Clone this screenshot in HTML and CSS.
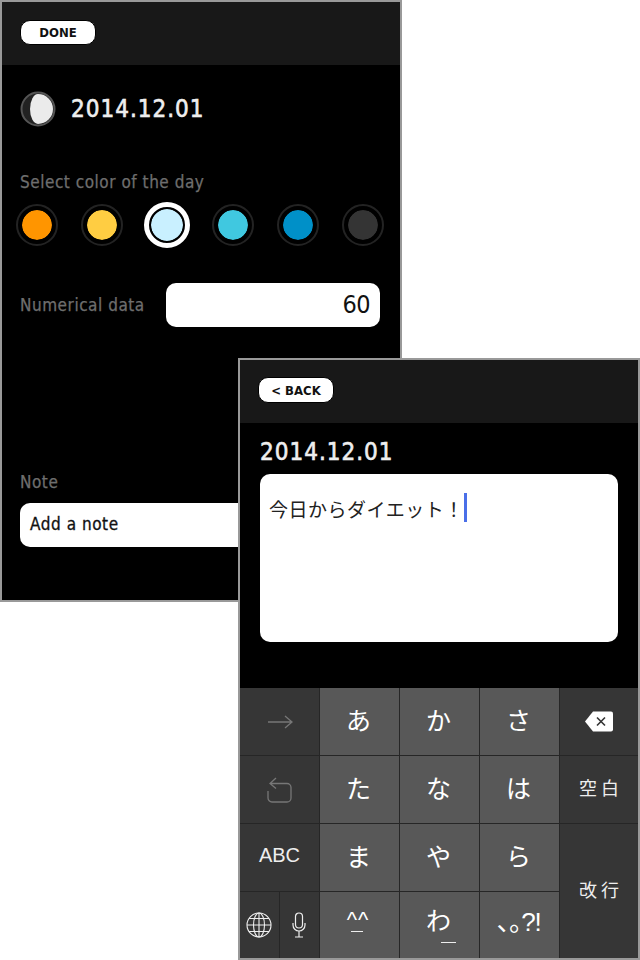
FILE: index.html
```html
<!DOCTYPE html>
<html lang="ja">
<head>
<meta charset="utf-8">
<title>Day entry</title>
<link rel="stylesheet" href="styles.css">
</head>
<body>
<section class="phone phone-detail">
  <header class="bar"><button class="pill pill-done">DONE</button></header>
  <div class="detail-body">
    <div class="date-row">
      <svg class="moon" width="36" height="36" viewBox="0 0 36 36"><circle cx="18" cy="18" r="16.500" fill="#222" stroke="#555" stroke-width="2"/><path d="M18 3A15 15 0 0 1 18 33A8 15 0 0 1 18 3z" fill="#ebebeb"/></svg>
      <h1 class="date">2014.12.01</h1>
    </div>
    <p class="label label-color">Select color of the day</p>
    <div class="swatches">
      <span class="swatch c1"></span>
      <span class="swatch c2"></span>
      <span class="swatch c3 selected"></span>
      <span class="swatch c4"></span>
      <span class="swatch c5"></span>
      <span class="swatch c6"></span>
    </div>
    <div class="num-row">
      <span class="label">Numerical data</span>
      <div class="field field-num">60</div>
    </div>
    <p class="label label-note">Note</p>
    <div class="field field-note">Add a note</div>
  </div>
</section>

<section class="phone phone-note">
  <header class="bar"><button class="pill pill-back">&lt; BACK</button></header>
  <div class="note-body">
    <h2 class="date date-note">2014.12.01</h2>
    <div class="editor"><span class="editor-text">今日からダイエット！</span><span class="caret"></span></div>
  </div>
  <div class="keyboard">
    <div class="key fn"><svg width="26" height="14" viewBox="0 0 26 14"><path d="M1 7h24M18 1l7 6-7 6" fill="none" stroke="#777" stroke-width="1.300"/></svg></div>
    <div class="key kana">あ</div>
    <div class="key kana">か</div>
    <div class="key kana">さ</div>
    <div class="key fn"><svg width="28" height="21" viewBox="0 0 28 21"><path d="M8 .5h18a2 2 0 0 1 2 2v16a2 2 0 0 1-2 2H8L0 10.500z" fill="#fff"/><path d="M12 6.500l8 8M20 6.500l-8 8" stroke="#333" stroke-width="1.600"/></svg></div>
    <div class="key fn"><svg width="26" height="26" viewBox="0 0 26 26"><path d="M9 1L3 6.500l6 5M3 6.500h17a4 4 0 0 1 4 4V21a4 4 0 0 1-4 4H5a4 4 0 0 1-4-4v-7" fill="none" stroke="#777" stroke-width="1.300"/></svg></div>
    <div class="key kana">た</div>
    <div class="key kana">な</div>
    <div class="key kana">は</div>
    <div class="key fn small">空白</div>
    <div class="key fn abc">ABC</div>
    <div class="key kana">ま</div>
    <div class="key kana">や</div>
    <div class="key kana">ら</div>
    <div class="key fn small return">改行</div>
    <div class="split">
      <div class="key fn shift-left"><svg width="26" height="26" viewBox="0 0 26 26" fill="none" stroke="#eee" stroke-width="1.100"><circle cx="13" cy="13" r="12"/><ellipse cx="13" cy="13" rx="5.500" ry="12"/><path d="M13 1v24M1 13h24M3 6.500h20M3 19.500h20"/></svg></div>
      <div class="key fn shift-left"><svg width="14" height="26" viewBox="0 0 14 26" fill="none" stroke="#eee" stroke-width="1.200"><rect x="3.500" y="1" width="7" height="15" rx="3.500"/><path d="M1 11v2a6 6 0 0 0 12 0v-2M7 19v6M3 25h8"/></svg></div>
    </div>
    <div class="key kaomoji">^^<span class="under"></span></div>
    <div class="key kana wa">わ<span class="under"></span></div>
    <div class="key punct">､｡?!</div>
  </div>
</section>
</body>
</html>
```

FILE: styles.css
```css
* { box-sizing: border-box; }
html, body { margin: 0; padding: 0; }
body {
  width: 640px;
  height: 960px;
  background: #fff;
  position: relative;
  overflow: hidden;
  font-family: "DejaVu Sans Condensed", "DejaVu Sans", sans-serif;
}
.phone {
  position: absolute;
  width: 402px;
  height: 602px;
  background: #000;
  border: 2px solid #999;
  display: flex;
  flex-direction: column;
}
.phone-detail { left: 0; top: 0; }
.phone-note { left: 238px; top: 358px; }
.bar {
  height: 63px;
  flex: none;
  background: #181818;
  padding: 18px 18px 0;
}
.pill {
  display: block;
  height: 25px;
  padding: 0;
  border: 1px solid #000;
  border-radius: 10px;
  background: #fff;
  color: #111;
  font: bold 13px "DejaVu Sans Condensed", "DejaVu Sans", sans-serif;
  text-align: center;
}
.pill-done { width: 76px; }
.pill-back { width: 76px; height: 26px; margin-top: -1px; }
.detail-body { padding: 26px 20px 0 18px; flex: 1; position: relative; }
.date-row { display: flex; align-items: center; gap: 15px; height: 36px; }
.moon { flex: none; }
.date {
  margin: 0;
  color: #eee;
  font-size: 24px;
  font-weight: 400;
  line-height: 28px;
  letter-spacing: 1px;
  -webkit-text-stroke: 0.6px #eee;
}
.label {
  margin: 0;
  color: #6e6e6e;
  font-size: 17px;
  font-weight: 400;
  line-height: 20px;
  letter-spacing: 0.53px;
  -webkit-text-stroke: 0.25px #6e6e6e;
}
.label-color { margin-top: 45px; }
.swatches {
  display: flex;
  justify-content: space-between;
  margin: 12px 0 0 -4px;
  width: 368px;
}
.swatch {
  width: 42px;
  height: 42px;
  border-radius: 50%;
  border: 6px solid #000;
  outline: 2px solid #232323;
  outline-offset: -2px;
  background-clip: padding-box;
}
.c1 { background-color: #ff9500; }
.c2 { background-color: #ffcd42; }
.c3 { background-color: #c9f0ff; }
.c4 { background-color: #40c8e0; }
.c5 { background-color: #0090c8; }
.c6 { background-color: #343434; }
.swatch.selected {
  outline: 5px solid #fff;
  outline-offset: -3.5px;
  border-width: 5.5px;
}
.num-row {
  display: flex;
  align-items: center;
  justify-content: space-between;
  margin-top: 37px;
}
.field {
  background: #fff;
  border-radius: 10px;
  color: #111;
}
.field-num {
  width: 214px;
  height: 44px;
  padding-right: 10px;
  text-align: right;
  font-size: 25px;
  letter-spacing: -0.5px;
  line-height: 44px;
}
.label-note { margin-top: 145px; }
.field-note {
  width: 380px;
  height: 44px;
  margin-top: 11px;
  padding-left: 10px;
  font-size: 17px;
  letter-spacing: 0.55px;
  -webkit-text-stroke: 0.3px #111;
  line-height: 43px;
}
.note-body { padding: 15px 20px 0; height: 265px; flex: none; }
.date-note { line-height: 28px; }
.editor {
  margin-top: 8px;
  height: 168px;
  background: #fff;
  border-radius: 10px;
  padding: 20px 9px 0;
  display: flex;
  align-items: flex-start;
  color: #222;
  font-family: "Noto Sans CJK JP", sans-serif;
  font-size: 19px;
}
.editor-text { letter-spacing: 0.5px; line-height: 30px; }
.caret { width: 3px; height: 29px; background: #4a6fe8; margin-top: -1px; }
.keyboard {
  flex: 1;
  display: grid;
  grid-template-columns: 79px 79px 79px 79px 1fr;
  grid-template-rows: 67px 67px 67px 1fr;
  gap: 1px;
  background: #262626;
}
.key {
  display: flex;
  align-items: center;
  justify-content: center;
  position: relative;
  background: #585858;
  color: #fff;
  font-family: "Noto Sans CJK JP", sans-serif;
  font-size: 25px;
}
.kana { padding: 0 2px 5px 0; }
.fn { background: #363636; }
.small { font-size: 18px; letter-spacing: 4px; color: #eee; padding: 0 0 5px 4px; }
.abc { font-family: "Liberation Sans", sans-serif; font-size: 20px; color: #eee; padding-bottom: 4px; }
.return { grid-column: 5; grid-row: 3 / span 2; }
.split {
  display: grid;
  grid-template-columns: 1fr 1fr;
  gap: 1px;
}
.shift-left { padding-right: 2px; }
.kaomoji { font-family: "Liberation Sans", sans-serif; font-size: 22px; letter-spacing: 1px; padding: 0 3px 10px 0; }
.under { position: absolute; width: 12px; height: 1px; background: #eee; bottom: 26px; left: 31px; }
.wa { padding-bottom: 12px; }
.wa .under { width: 15px; bottom: 15px; left: 41px; }
.punct { font-family: "Liberation Sans", "Noto Sans CJK JP", sans-serif; font-size: 26px; letter-spacing: -1px; padding: 0 1px 12px 0; }
```
